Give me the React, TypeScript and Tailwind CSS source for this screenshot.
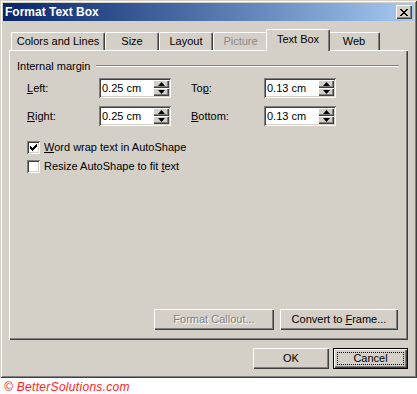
import React from "react";

const raised =
  "bg-[#d4d0c8] shadow-[inset_1px_1px_0_#ffffff,inset_-1px_-1px_0_#404040,inset_-2px_-2px_0_#808080]";
const sunken =
  "shadow-[inset_1px_1px_0_#808080,inset_-1px_-1px_0_#ffffff,inset_2px_2px_0_#404040,inset_-2px_-2px_0_#d4d0c8]";

function Spin({ value }: { value: string }) {
  return (
    <div className={`w-[72px] h-[20px] bg-white p-[2px] flex ${sunken}`}>
      <div className="flex-1 pl-[1px] leading-[16px]">{value}</div>
      <div className="w-[16px] flex flex-col">
        <div className={`h-[8px] flex items-center justify-center ${raised}`}>
          <svg width="7" height="4" viewBox="0 0 7 4" className="mb-[1px]">
            <polygon points="3.5,0 7,4 0,4" fill="#000" />
          </svg>
        </div>
        <div className={`h-[8px] flex items-center justify-center ${raised}`}>
          <svg width="7" height="4" viewBox="0 0 7 4" className="mb-[1px]">
            <polygon points="0,0 7,0 3.5,4" fill="#000" />
          </svg>
        </div>
      </div>
    </div>
  );
}

function Check({ checked }: { checked: boolean }) {
  return (
    <div className={`w-[13px] h-[13px] bg-white flex items-center justify-center ${sunken}`}>
      {checked && (
        <svg width="13" height="13" viewBox="0 0 13 13" shapeRendering="crispEdges">
          <path d="M3 5h1v3h-1z M4 6h1v3h-1z M5 7h1v3h-1z M6 6h1v3h-1z M7 5h1v3h-1z M8 4h1v3h-1z M9 3h1v3h-1z" fill="#000" />
        </svg>
      )}
    </div>
  );
}

function Tab({ label, w, disabled }: { label: string; w: string; disabled?: boolean }) {
  return (
    <div
      className={`${w} h-[18px] flex items-center justify-center rounded-t-[2px] border-t border-l border-white border-r border-r-[#404040] shadow-[inset_-1px_0_0_#808080] ${
        disabled ? "text-[#8a8a8a]" : "text-black"
      }`}
    >
      <span>{label}</span>
    </div>
  );
}

export default function App() {
  return (
    <div className="w-[417px] h-[394px] bg-white font-['Liberation_Sans',Arial,sans-serif] text-[11px] text-black leading-[13px]">
      <div className="w-[417px] h-[378px] bg-[#d4d0c8] p-[3px] flex flex-col shadow-[inset_1px_1px_0_#d4d0c8,inset_-1px_-1px_0_#404040,inset_2px_2px_0_#ffffff,inset_-2px_-2px_0_#808080]">
        {/* Title bar */}
        <div className="h-[18px] bg-gradient-to-r from-[#0a246a] to-[#a6caf0] flex items-center justify-between pl-[2px] pr-[2px]">
          <span className="text-white font-bold text-[12px] leading-[14px]">Format Text Box</span>
          <div className={`w-[16px] h-[14px] flex items-center justify-center ${raised}`}>
            <svg width="8" height="7" viewBox="0 0 8 7" shapeRendering="crispEdges">
              <path
                d="M0 0h2v1h-2z M6 0h2v1h-2z M1 1h2v1h-2z M5 1h2v1h-2z M2 2h4v1h-4z M3 3h2v1h-2z M2 4h4v1h-4z M1 5h2v1h-2z M5 5h2v1h-2z M0 6h2v1h-2z M6 6h2v1h-2z"
                fill="#000"
              />
            </svg>
          </div>
        </div>

        <div className="px-[6px] flex flex-col">
          {/* Tabs */}
          <div className="mt-[8px] h-[21px] flex items-end pl-[2px]">
            <Tab label="Colors and Lines" w="w-[94px]" />
            <Tab label="Size" w="w-[54px]" />
            <Tab label="Layout" w="w-[54px]" />
            <Tab label="Picture" w="w-[55px]" disabled />
            <div className="relative z-10 w-[64px] h-[22px] -mx-[2px] -mb-[1px] bg-[#d4d0c8] flex items-center justify-center rounded-t-[2px] border-t border-l border-white border-r border-r-[#404040] shadow-[inset_-1px_0_0_#808080] pb-[2px]">
              <span>Text Box</span>
            </div>
            <Tab label="Web" w="w-[52px]" />
          </div>

          {/* Panel */}
          <div className="relative z-0 h-[290px] flex flex-col shadow-[inset_1px_1px_0_#ffffff,inset_-1px_-1px_0_#404040,inset_-2px_-2px_0_#808080]">
            <div className="mt-[10px] h-[12px] flex items-center pl-[8px] pr-[9px]">
              <span>Internal margin</span>
              <div className="ml-[6px] flex-1 h-[2px] border-t border-[#808080] border-b border-b-white" />
            </div>

            <div className="mt-[6px] h-[20px] flex items-center pl-[18px]">
              <span className="w-[72px]">
                <span className="underline">L</span>eft:
              </span>
              <Spin value="0.25 cm" />
              <span className="ml-[20px] w-[73px]">
                To<span className="underline">p</span>:
              </span>
              <Spin value="0.13 cm" />
            </div>

            <div className="mt-[8px] h-[20px] flex items-center pl-[18px]">
              <span className="w-[72px]">
                <span className="underline">R</span>ight:
              </span>
              <Spin value="0.25 cm" />
              <span className="ml-[20px] w-[73px]">
                <span className="underline">B</span>ottom:
              </span>
              <Spin value="0.13 cm" />
            </div>

            <div className="mt-[15px] h-[13px] flex items-center pl-[18px] gap-[4px]">
              <Check checked />
              <span>
                <span className="underline">W</span>ord wrap text in AutoShape
              </span>
            </div>
            <div className="mt-[6px] h-[13px] flex items-center pl-[18px] gap-[4px]">
              <Check checked={false} />
              <span>
                Resize AutoShape to fit <span className="underline">t</span>ext
              </span>
            </div>

            <div className="flex-1" />

            <div className="mb-[10px] pr-[10px] flex justify-end gap-[6px]">
              <div className={`w-[120px] h-[21px] flex items-center justify-center text-[#808080] [text-shadow:1px_1px_0_#ffffff] ${raised}`}>
                <span>Format Callout...</span>
              </div>
              <div className={`w-[118px] h-[21px] flex items-center justify-center ${raised}`}>
                <span>
                  Convert to <span className="underline">F</span>rame...
                </span>
              </div>
            </div>
          </div>

          {/* Bottom buttons */}
          <div className="mt-[8px] flex justify-end gap-[4px]">
            <div className={`w-[76px] h-[21px] flex items-center justify-center ${raised}`}>
              <span>OK</span>
            </div>
            <div className="w-[75px] h-[21px] border border-black">
              <div className={`w-full h-full flex items-center justify-center p-[3px] ${raised}`}>
                <div className="w-full h-full flex items-center justify-center border border-dotted border-black">
                  <span>Cancel</span>
                </div>
              </div>
            </div>
          </div>
        </div>
      </div>
      <div className="pl-[4px] pt-[2px] text-[#ff2020] italic text-[12px] leading-[14px] tracking-[0.3px]">
        © BetterSolutions.com
      </div>
    </div>
  );
}
